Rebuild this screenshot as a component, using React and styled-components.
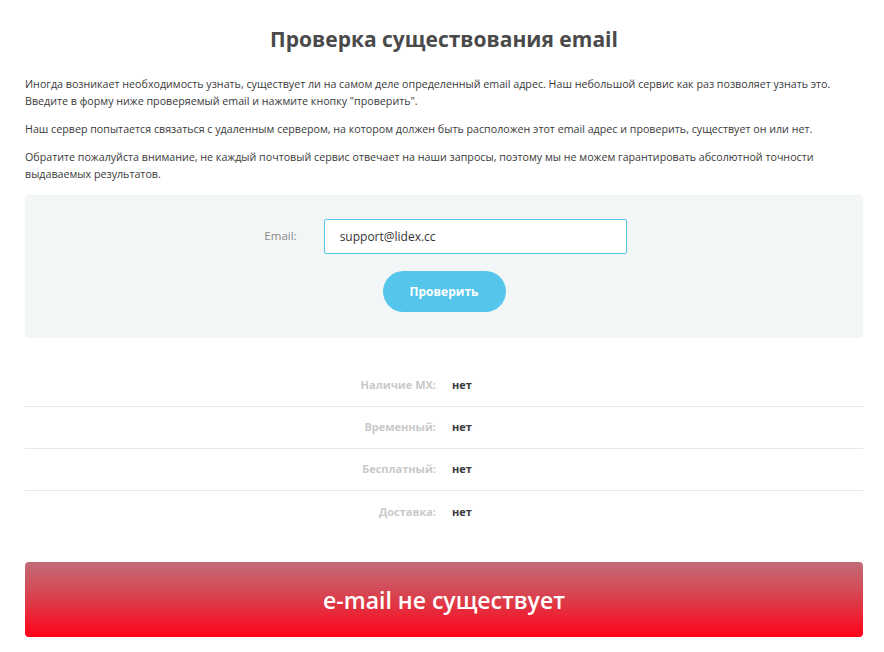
import React from "react";
import styled, { createGlobalStyle } from "styled-components";

const GlobalStyle = createGlobalStyle`
  html, body {
    margin: 0;
    padding: 0;
    background: #ffffff;
  }
  body {
    font-family: "Open Sans", "Liberation Sans", sans-serif;
    color: #333;
  }
`;

const Page = styled.div`
  padding: 0 21px 0 25px;
`;

const Title = styled.h1`
  margin: 0;
  padding-top: 25px;
  height: 28px;
  text-align: center;
  font-family: "Open Sans", "Liberation Sans", sans-serif;
  font-weight: 700;
  font-size: 21px;
  line-height: 28px;
  color: #4a4a4a;
`;

const Intro = styled.div`
  padding-top: 23px;
`;

const Paragraph = styled.p`
  margin: 0 0 11px;
  font-size: 10.7px;
  line-height: 17px;
  color: #3a3a3a;
`;

const FormPanel = styled.div`
  margin-top: 12px;
  background: #f3f6f7;
  border-radius: 4px;
  padding: 24px 0 26px;
  display: flex;
  flex-direction: column;
  align-items: center;
  gap: 17px;
`;

const FieldRow = styled.div`
  display: flex;
  align-items: center;
  gap: 27px;
  padding-left: 3px;
`;

const FieldLabel = styled.label`
  font-family: "Open Sans", "Liberation Sans", sans-serif;
  font-size: 11.5px;
  color: #888;
  margin-top: -2px;
`;

const Input = styled.input`
  box-sizing: border-box;
  width: 303px;
  height: 35px;
  padding: 0 15px;
  border: 1px solid #5ac6ea;
  border-radius: 2px;
  background: #fff;
  font-family: "Open Sans", "Liberation Sans", sans-serif;
  font-size: 12px;
  color: #333;
  outline: none;
`;

const SubmitButton = styled.button`
  width: 123px;
  height: 41px;
  border: none;
  border-radius: 21px;
  background: #55c5eb;
  color: #fff;
  font-family: "Open Sans", "Liberation Sans", sans-serif;
  font-weight: 700;
  font-size: 12px;
  cursor: pointer;
`;

const Results = styled.div`
  margin-top: 27px;
`;

const ResultRow = styled.div`
  display: grid;
  grid-template-columns: 1fr 1fr;
  column-gap: 16px;
  align-items: center;
  box-sizing: border-box;
  height: 42px;
  padding-bottom: 2px;
  border-bottom: ${(p) => (p.$last ? "none" : "1px solid #e8e8e8")};
`;

const ResultLabel = styled.span`
  text-align: right;
  font-weight: 700;
  font-size: 11px;
  color: #c9c9c9;
`;

const ResultValue = styled.span`
  font-weight: 700;
  font-size: 11px;
  color: #3a3a3a;
`;

const Verdict = styled.div`
  margin-top: 29px;
  height: 75px;
  border-radius: 4px;
  background: linear-gradient(to bottom, #c16c79 0%, #d8434f 45%, #ff0219 100%);
  display: flex;
  align-items: center;
  justify-content: center;
  color: #fff;
  font-family: "Open Sans", "Liberation Sans", sans-serif;
  font-weight: 600;
  font-size: 23px;
`;

const results = [
  { label: "Наличие MX:", value: "нет" },
  { label: "Временный:", value: "нет" },
  { label: "Бесплатный:", value: "нет" },
  { label: "Доставка:", value: "нет" },
];

export default function App() {
  return (
    <>
      <GlobalStyle />
      <Page>
        <Title>Проверка существования email</Title>
        <Intro>
          <Paragraph>
            Иногда возникает необходимость узнать, существует ли на самом деле
            определенный email адрес. Наш небольшой сервис как раз позволяет
            узнать это.
            <br />
            Введите в форму ниже проверяемый email и нажмите кнопку "проверить".
          </Paragraph>
          <Paragraph>
            Наш сервер попытается связаться с удаленным сервером, на котором
            должен быть расположен этот email адрес и проверить, существует он
            или нет.
          </Paragraph>
          <Paragraph>
            Обратите пожалуйста внимание, не каждый почтовый сервис отвечает на
            наши запросы, поэтому мы не можем гарантировать абсолютной точности
            выдаваемых результатов.
          </Paragraph>
        </Intro>
        <FormPanel>
          <FieldRow>
            <FieldLabel htmlFor="email">Email:</FieldLabel>
            <Input id="email" defaultValue="support@lidex.cc" />
          </FieldRow>
          <SubmitButton>Проверить</SubmitButton>
        </FormPanel>
        <Results>
          {results.map((r, i) => (
            <ResultRow key={r.label} $last={i === results.length - 1}>
              <ResultLabel>{r.label}</ResultLabel>
              <ResultValue>{r.value}</ResultValue>
            </ResultRow>
          ))}
        </Results>
        <Verdict>e-mail не существует</Verdict>
      </Page>
    </>
  );
}
